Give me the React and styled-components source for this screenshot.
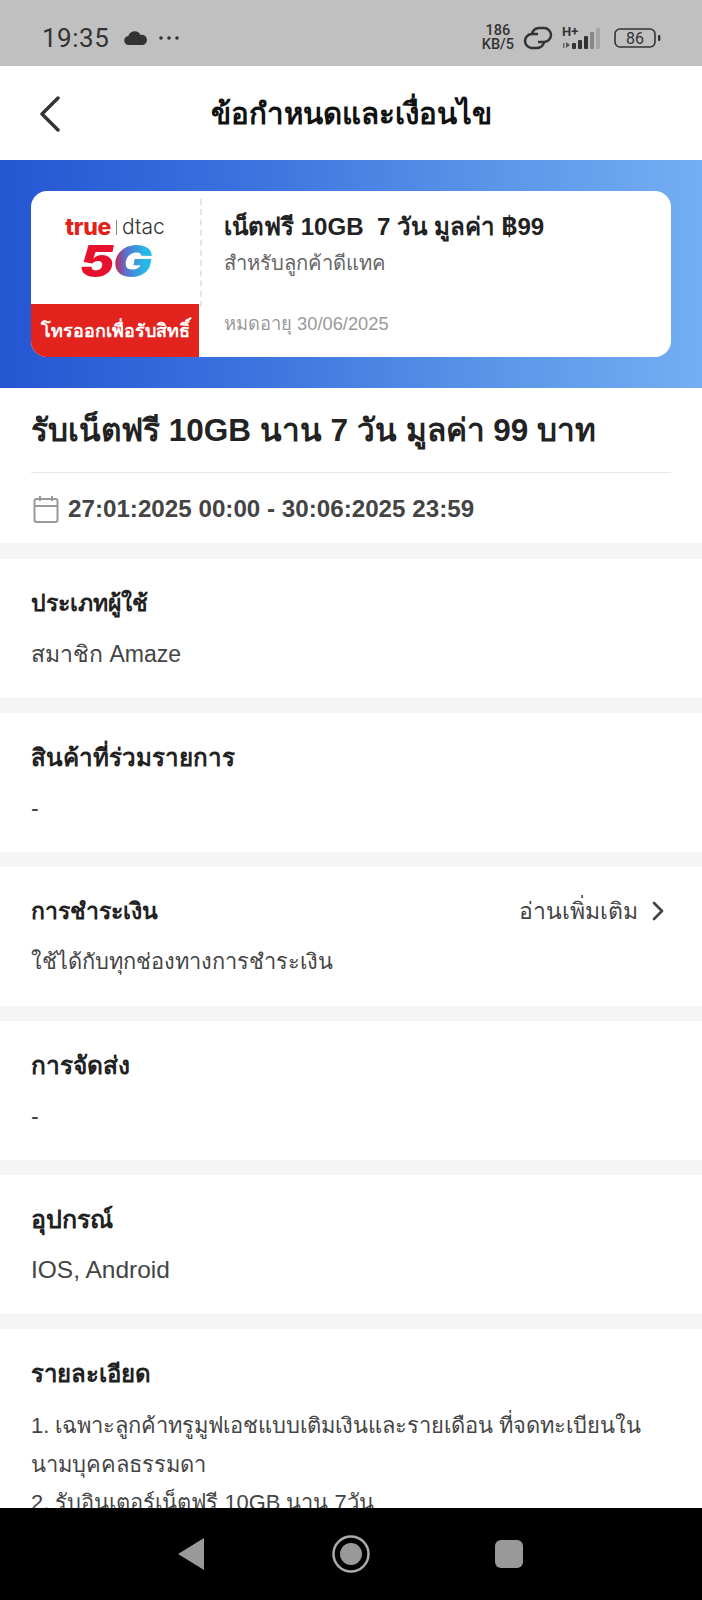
import React from 'react';
import styled, { createGlobalStyle } from 'styled-components';
import { ChevronRight } from 'lucide-react';

const Global = createGlobalStyle`
  html, body { margin: 0; padding: 0; background: #fff; }
  * { box-sizing: border-box; }
  body { font-family: "Liberation Sans", Inter, "Noto Sans", sans-serif; }
`;

const Phone = styled.div`
  width: 702px;
  height: 1600px;
  display: flex;
  flex-direction: column;
  overflow: hidden;
  color: #222;
`;

/* status bar */
const StatusBar = styled.div`
  flex: 0 0 66px;
  background: #c0c0c0;
  display: flex;
  align-items: center;
  justify-content: space-between;
  padding: 10px 40px 0 42px;
  color: #333;
`;
const StatusGroup = styled.div`
  display: flex;
  align-items: center;
  gap: ${p => p.$gap || 8}px;
`;
const Clock = styled.span`
  font-family: Roboto, sans-serif;
  font-size: 26px;
  letter-spacing: 0.5px;
  margin-right: 5px;
`;
const Speed = styled.span`
  font-family: Roboto, sans-serif;
  font-size: 14.5px;
  line-height: 14px;
  font-weight: 500;
  text-align: center;
`;

/* header */
const Header = styled.header`
  flex: 0 0 94px;
  display: flex;
  align-items: center;
  justify-content: center;
  position: relative;
  background: #fff;
`;
const BackButton = styled.span`
  position: absolute;
  left: 39px;
  top: 30px;
  display: flex;
`;
const HeaderTitle = styled.h1`
  margin: 0;
  font-size: 29.5px;
  font-weight: 700;
  color: #111;
`;

/* scroll area */
const Scroll = styled.main`
  flex: 1;
  overflow: hidden;
  background: #f5f5f5;
`;
const Banner = styled.div`
  height: 228px;
  padding: 31px;
  background: linear-gradient(90deg, #2456d2 0%, #3b72de 35%, #5a95e8 70%, #74aef3 100%);
`;
const Coupon = styled.div`
  height: 166px;
  background: #fff;
  border-radius: 16px;
  overflow: hidden;
  display: flex;
`;
const CouponLeft = styled.div`
  width: 168px;
  display: flex;
  flex-direction: column;
`;
const LogoBox = styled.div`
  flex: 1;
  display: flex;
  flex-direction: column;
  align-items: center;
  padding-top: 25px;
`;
const Brand = styled.div`
  display: flex;
  align-items: center;
  gap: 5px;
  height: 22px;
  line-height: 22px;
  font-family: Inter, sans-serif;
`;
const BrandTrue = styled.span`
  font-size: 23px;
  font-weight: 800;
  color: #e2231a;
  letter-spacing: -0.3px;
`;
const BrandBar = styled.span`
  width: 1px;
  height: 15px;
  background: #888;
`;
const BrandDtac = styled.span`
  font-size: 21px;
  font-weight: 300;
  color: #333;
`;
const FiveG = styled.span`
  display: inline-block;
  font-family: Inter, sans-serif;
  font-size: 44px;
  line-height: 36px;
  font-weight: 900;
  font-style: italic;
  letter-spacing: -1px;
  padding: 0 5px;
  margin-top: 5px;
  transform: scaleX(1.18);
  background: linear-gradient(90deg, #e8112d 0%, #e8112d 45%, #5a6fd0 62%, #25b9e8 85%);
  -webkit-background-clip: text;
  background-clip: text;
  color: transparent;
`;
const CallTag = styled.div`
  height: 53px;
  background: #e2231e;
  color: #fff;
  font-size: 18px;
  font-weight: 700;
  display: flex;
  align-items: center;
  justify-content: center;
  white-space: nowrap;
`;
const DashLine = styled.div`
  width: 0;
  margin: 8px 0 50px 1px;
  border-left: 2px dashed #e6e6e6;
`;
const CouponBody = styled.div`
  flex: 1;
  padding: 20px 0 0 22px;
  display: flex;
  flex-direction: column;
`;
const CouponTitle = styled.div`
  font-size: 24.1px;
  line-height: 32px;
  font-weight: 700;
  color: #222;
  white-space: pre;
`;
const CouponSub = styled.div`
  font-size: 20.2px;
  line-height: 34px;
  margin-top: 3px;
  color: #666;
`;
const CouponExpire = styled.div`
  margin-top: 30px;
  font-size: 18.3px;
  line-height: 28px;
  color: #999;
`;

const Panel = styled.section`
  background: #fff;
  padding: ${p => p.$pad || '22px 31px 0'};
  height: ${p => p.$height || 139}px;
  margin-bottom: ${p => p.$gap || 15}px;
  overflow: hidden;
`;
const MainTitle = styled.h2`
  margin: 0;
  font-size: 31.5px;
  line-height: 44px;
  font-weight: 700;
  color: #222;
  padding-bottom: 20px;
  border-bottom: 1px solid #e8e8e8;
`;
const DateRow = styled.div`
  display: flex;
  align-items: center;
  gap: 9px;
  padding: 20px 2px 0;
  font-size: 24.2px;
  line-height: 32px;
  font-weight: 700;
  color: #444;
`;
const LabelRow = styled.div`
  display: flex;
  align-items: center;
  justify-content: space-between;
  height: 44px;
`;
const Label = styled.div`
  font-size: ${p => p.$size || 24}px;
  font-weight: 700;
  color: #222;
`;
const More = styled.div`
  display: flex;
  align-items: center;
  gap: 4px;
  margin-right: -3px;
  font-size: 23px;
  color: #444;
`;
const Value = styled.div`
  margin-top: ${p => p.$top || 9}px;
  font-size: ${p => p.$size || 23}px;
  line-height: ${p => p.$line || 40}px;
  color: #444;
  white-space: nowrap;
`;

/* nav bar */
const NavBar = styled.nav`
  flex: 0 0 92px;
  background: #000;
  display: flex;
  align-items: center;
  padding-left: 178px;
  position: relative;
  z-index: 1;
`;
const NavIcon = styled.svg`
  display: block;
  margin-right: ${p => p.$after || 0}px;
`;

const sections = [
  { label: 'ประเภทผู้ใช้', labelSize: 23, value: 'สมาชิก Amaze', size: 23 },
  { label: 'สินค้าที่ร่วมรายการ', labelSize: 24.2, value: '-' },
  { label: 'การชำระเงิน', labelSize: 23, value: 'ใช้ได้กับทุกช่องทางการชำระเงิน', size: 21.8, more: true },
  { label: 'การจัดส่ง', labelSize: 24.5, value: '-' },
  { label: 'อุปกรณ์', labelSize: 25, value: 'IOS, Android', size: 24.5 },
];

const App = () => (
  <Phone>
    <Global />
    <StatusBar>
      <StatusGroup $gap={10}>
        <Clock>19:35</Clock>
        <svg width="24" height="16" viewBox="0 0 24 16" fill="#333">
          <path d="M5 15a4.5 4.5 0 0 1-.6-9A6.5 6.5 0 0 1 16.6 5 5 5 0 0 1 19 15z" />
        </svg>
        <svg width="24" height="6" viewBox="0 0 24 6" fill="#333">
          <circle cx="3" cy="3" r="1.8" />
          <circle cx="11" cy="3" r="1.8" />
          <circle cx="19" cy="3" r="1.8" />
        </svg>
      </StatusGroup>
      <StatusGroup $gap={8}>
        <Speed>186<br />KB/5</Speed>
        <svg width="32" height="24" viewBox="0 0 32 24" fill="none" stroke="#333" strokeWidth="2.5">
          <path d="M16 8h-6a7 7 0 0 0 0 14h5a7.5 7.5 0 0 0 7-6" />
          <path d="M16 16h6a7 7 0 0 0 0-14h-5a7.5 7.5 0 0 0-7 6" />
        </svg>
        <svg width="44" height="26" viewBox="0 0 44 26" fill="#333">
          <text x="0" y="11" fontSize="13" fontWeight="700" fontFamily="Roboto, sans-serif">H+</text>
          <rect x="1" y="18" width="1.5" height="5" fill="#666" />
          <path d="M4 17l4 3-4 3z" fill="#555" />
          <rect x="10" y="18" width="4" height="6" rx="1" />
          <rect x="16" y="15" width="4" height="9" rx="1" />
          <rect x="22" y="11" width="4" height="13" rx="1" />
          <rect x="28" y="7" width="4" height="17" rx="1" fill="#888" />
          <rect x="34" y="3" width="4" height="21" rx="1" fill="#a6a6a6" />
        </svg>
        <svg width="48" height="20" viewBox="0 0 48 20" fill="none">
          <rect x="1" y="1" width="40" height="18" rx="5" stroke="#333" strokeWidth="1.6" />
          <rect x="44" y="7" width="2.4" height="6" rx="1" fill="#333" />
          <text x="21" y="15.5" textAnchor="middle" fontSize="16" fill="#333" fontFamily="Roboto, sans-serif">86</text>
        </svg>
      </StatusGroup>
    </StatusBar>

    <Header>
      <BackButton>
        <svg width="22" height="36" viewBox="0 0 22 36" fill="none" stroke="#333" strokeWidth="3.4" strokeLinecap="round" strokeLinejoin="round">
          <path d="M19 2L3 18l16 16" />
        </svg>
      </BackButton>
      <HeaderTitle>ข้อกำหนดและเงื่อนไข</HeaderTitle>
    </Header>

    <Scroll>
      <Banner>
        <Coupon>
          <CouponLeft>
            <LogoBox>
              <Brand>
                <BrandTrue>true</BrandTrue>
                <BrandBar />
                <BrandDtac>dtac</BrandDtac>
              </Brand>
              <FiveG>5G</FiveG>
            </LogoBox>
            <CallTag>โทรออกเพื่อรับสิทธิ์</CallTag>
          </CouponLeft>
          <DashLine />
          <CouponBody>
            <CouponTitle>เน็ตฟรี 10GB  7 วัน มูลค่า ฿99</CouponTitle>
            <CouponSub>สำหรับลูกค้าดีแทค</CouponSub>
            <CouponExpire>หมดอายุ 30/06/2025</CouponExpire>
          </CouponBody>
        </Coupon>
      </Banner>

      <Panel $height={155} $gap={16} $pad="20px 31px 0">
        <MainTitle>รับเน็ตฟรี 10GB นาน 7 วัน มูลค่า 99 บาท</MainTitle>
        <DateRow>
          <svg width="26" height="28" viewBox="0 0 26 28" fill="none" stroke="#999" strokeWidth="2">
            <rect x="1.5" y="4" width="23" height="23" rx="2" />
            <path d="M1.5 11h23M7 1v5M19 1v5" />
          </svg>
          27:01:2025 00:00 - 30:06:2025 23:59
        </DateRow>
      </Panel>

      {sections.map(s => (
        <Panel key={s.label}>
          <LabelRow>
            <Label $size={s.labelSize}>{s.label}</Label>
            {s.more && <More>อ่านเพิ่มเติม <ChevronRight size={32} strokeWidth={2} /></More>}
          </LabelRow>
          <Value $size={s.size}>{s.value}</Value>
        </Panel>
      ))}

      <Panel $height={200}>
        <LabelRow><Label>รายละเอียด</Label></LabelRow>
        <Value $size={21.9} $line={38.5} $top={12}>
          1. เฉพาะลูกค้าทรูมูฟเอชแบบเติมเงินและรายเดือน ที่จดทะเบียนใน<br />
          นามบุคคลธรรมดา<br />
          2. รับอินเตอร์เน็ตฟรี 10GB นาน 7วัน
        </Value>
      </Panel>
    </Scroll>

    <NavBar>
      <NavIcon $after={128} width="26" height="32" viewBox="0 0 26 32" fill="#999">
        <path d="M26 0v32L0 16z" />
      </NavIcon>
      <NavIcon $after={125} width="38" height="38" viewBox="0 0 38 38">
        <circle cx="19" cy="19" r="17.5" fill="none" stroke="#aaa" strokeWidth="2.5" />
        <circle cx="19" cy="19" r="11" fill="#999" />
      </NavIcon>
      <NavIcon width="28" height="28" viewBox="0 0 28 28" fill="#999">
        <rect width="28" height="28" rx="6" />
      </NavIcon>
    </NavBar>
  </Phone>
);

export default App;
